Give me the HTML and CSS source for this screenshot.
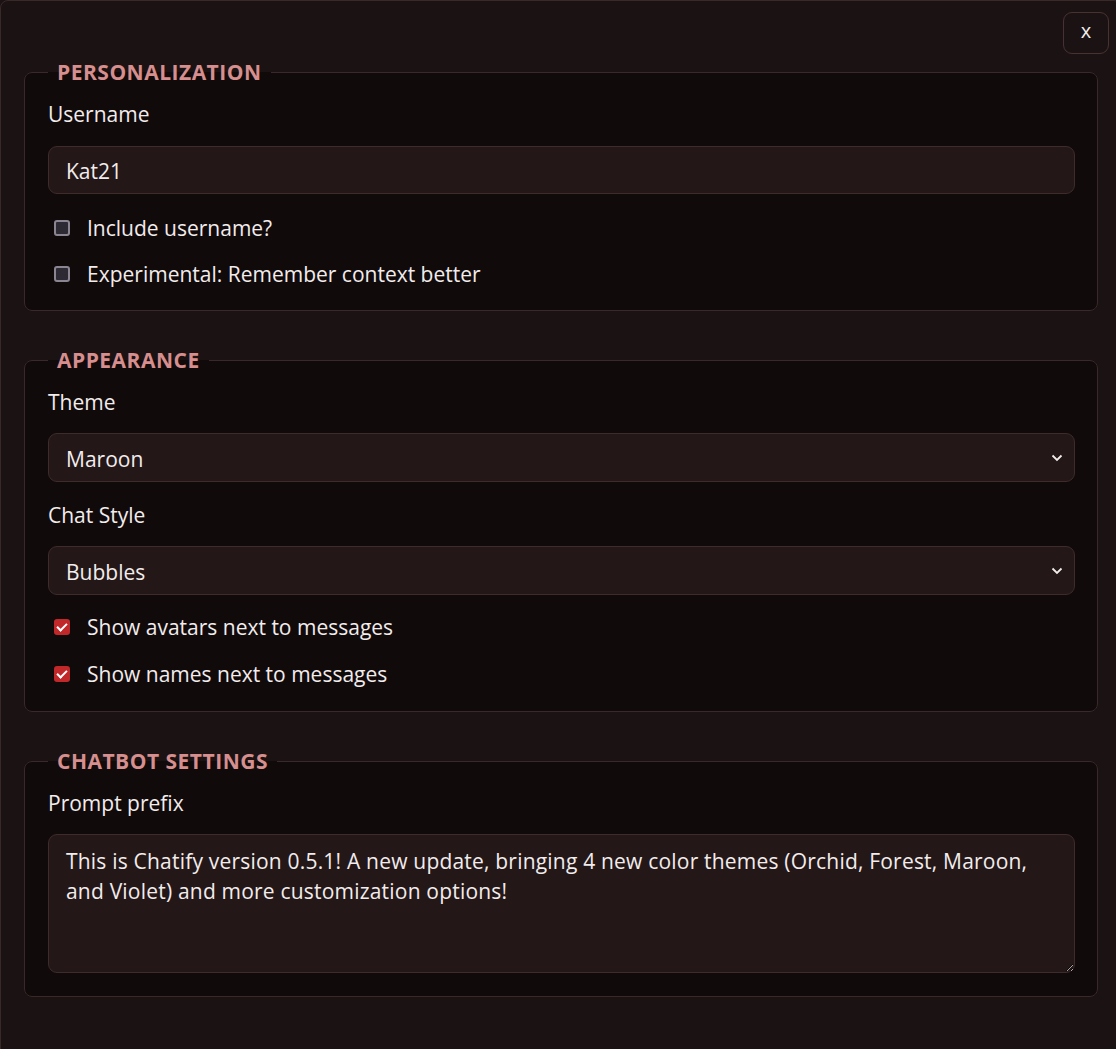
FILE: index.html
```html
<!DOCTYPE html>
<html lang="en">
<head>
<meta charset="utf-8">
<title>Settings</title>
<link rel="stylesheet" href="styles.css">
</head>
<body>
<div class="dialog">
  <button class="close" type="button">x</button>
  <fieldset class="group">
    <legend>Personalization</legend>
    <label class="field-label" for="username">Username</label>
    <input class="text-input" id="username" type="text" value="Kat21">
    <label class="check-row"><input type="checkbox" class="check"> <span>Include username?</span></label>
    <label class="check-row"><input type="checkbox" class="check"> <span>Experimental: Remember context better</span></label>
  </fieldset>
  <fieldset class="group">
    <legend>Appearance</legend>
    <label class="field-label" for="theme">Theme</label>
    <select class="select" id="theme"><option>Maroon</option></select>
    <label class="field-label spaced" for="style">Chat Style</label>
    <select class="select" id="style"><option>Bubbles</option></select>
    <label class="check-row first"><input type="checkbox" class="check" checked> <span>Show avatars next to messages</span></label>
    <label class="check-row wide"><input type="checkbox" class="check" checked> <span>Show names next to messages</span></label>
  </fieldset>
  <fieldset class="group last">
    <legend>Chatbot Settings</legend>
    <label class="field-label" for="prefix">Prompt prefix</label>
    <textarea class="textarea" id="prefix">This is Chatify version 0.5.1! A new update, bringing 4 new color themes (Orchid, Forest, Maroon, and Violet) and more customization options!</textarea>
  </fieldset>
</div>
</body>
</html>
```
FILE: styles.css
```css
html, body {
  margin: 0;
  padding: 0;
  background: #1b1313;
  overflow: hidden;
  height: 100%;
}
body {
  font-family: "Open Sans", "Noto Sans", sans-serif;
  font-size: 21px;
  color: #f2ecec;
}
.dialog {
  position: relative;
  box-sizing: border-box;
  width: 1122px;
  min-height: 1100px;
  border: 1px solid #3b2828;
  border-radius: 8px;
  background: #1b1313;
  padding: 56px 23px 24px 23px;
}
.close {
  position: absolute;
  top: 11px;
  right: 12px;
  width: 46px;
  height: 42px;
  border: 1px solid #4a3131;
  border-radius: 9px;
  background: #1b1313;
  color: #f2ecec;
  font-family: inherit;
  font-size: 20px;
  line-height: 1;
  padding: 0 0 4px;
}
.group {
  margin: 0 0 34px;
  padding: 12px 22px 22px 23px;
  border: 1px solid #3b2828;
  border-radius: 8px;
  background: #110a0b;
  display: flex;
  flex-direction: column;
  min-width: 0;
}
.group:first-of-type {
  padding-bottom: 21px;
}
.group.last {
  padding-bottom: 23px;
}
.group legend {
  padding: 0 9px;
  font-weight: 700;
  text-transform: uppercase;
  color: #d68e8e;
  line-height: 30px;
  font-size: 21px;
  letter-spacing: 0.5px;
}
.field-label {
  display: block;
  line-height: 30px;
}
.field-label.spaced {
  margin-top: 18px;
}
.text-input, .select, .textarea {
  box-sizing: border-box;
  width: 100%;
  margin-top: 16px;
  border: 1px solid #3f2b2b;
  border-radius: 9px;
  background-color: #231718;
  color: #f2ecec;
  font-family: inherit;
  font-size: 21px;
  outline: none;
}
.text-input {
  height: 48px;
  padding: 1px 17px 0;
  margin-top: 17px;
}
.select {
  height: 49px;
  padding: 3px 40px 0 17px;
  appearance: none;
  -webkit-appearance: none;
  background-image: url("data:image/svg+xml,%3Csvg xmlns='http://www.w3.org/2000/svg' width='12' height='8' viewBox='0 0 12 8'%3E%3Cpath d='M1.5 1.5 L6 6 L10.5 1.5' fill='none' stroke='%23f2ecec' stroke-width='1.8'/%3E%3C/svg%3E");
  background-repeat: no-repeat;
  background-position: right 11px center;
}
.textarea {
  height: 139px;
  padding: 11px 17px 10px;
  line-height: 30px;
  letter-spacing: 0.2px;
  resize: vertical;
  color-scheme: dark;
}
.check-row {
  display: flex;
  align-items: center;
  gap: 17px;
  line-height: 30px;
  margin-top: 16px;
  padding-left: 6px;
}
.text-input + .check-row {
  margin-top: 19px;
}
.check-row.first {
  margin-top: 17px;
}
.check-row.wide {
  margin-top: 17px;
}
.check {
  appearance: none;
  -webkit-appearance: none;
  margin: 0;
  width: 16px;
  height: 16px;
  box-sizing: border-box;
  border: 2px solid #8a8590;
  border-radius: 3px;
  background: #2d2a33;
  position: relative;
  flex: none;
}
.check:checked {
  border: none;
  background: #c0282a;
}
.check:checked::after {
  content: "";
  position: absolute;
  left: 5px;
  top: 2px;
  width: 4px;
  height: 8px;
  border: solid #ffffff;
  border-width: 0 2.5px 2.5px 0;
  transform: rotate(45deg);
}
```
